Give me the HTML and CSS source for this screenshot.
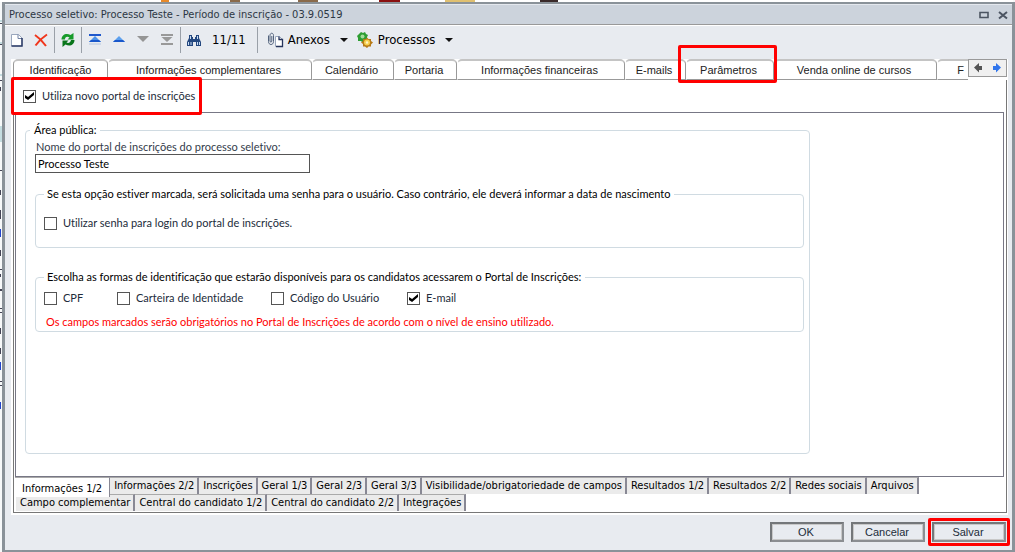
FILE: index.html
```
<!DOCTYPE html>
<html lang="pt-BR">
<head>
<meta charset="utf-8">
<title>Processo seletivo: Processo Teste</title>
<link rel="stylesheet" href="styles.css">
</head>
<body>
<div class="backdrop">
<svg class="backdrop-top" height="2" width="1015" aria-hidden="true"><path fill="#e88a2a" d="M161 0h8v2h-8z"/><path fill="#8a6a4a" d="M230 0h10v2h-10zM298 0h20v2h-20z"/><path fill="#8a1010" d="M379 0h21v2h-21z"/><path fill="#e0c070" d="M445 0h30v2h-30z"/><path fill="#3a2a2a" d="M540 0h18v2h-18z"/></svg>
<svg class="backdrop-side" width="2" height="552" aria-hidden="true"><path fill="#c4dce0" d="M0 20h2v2H0zM0 42h2v2H0zM0 74h2v2H0zM0 126h2v16H0z"/><path fill="#445" d="M0 23h2v1H0zM0 44h2v1H0zM0 80h2v1H0zM0 87h1v4H0zM0 170h2v1H0zM0 190h1v5H0zM0 210h1v9H0zM0 250h1v6H0zM0 269h2v1H0zM0 274h1v3H0zM0 289h2v2H0zM0 308h2v1H0zM0 312h2v1H0zM0 328h1v6H0zM0 348h1v6H0zM0 381h2v1H0zM0 385h2v1H0z"/><path fill="#24c" d="M0 229h1v8H0zM0 362h1v8H0zM0 402h1v7H0z"/></svg>
<div class="window">
  <header class="titlebar">
    <span class="title">Processo seletivo: Processo Teste - Período de inscrição - 03.9.0519</span>
    <button class="winbtn" aria-label="Maximizar"><svg width="10" height="10"><path d="M1 2.500h8v5h-8z" fill="none" stroke="#4c5562" stroke-width="1.600"/></svg></button>
    <button class="winbtn" aria-label="Fechar"><svg width="10" height="10"><path d="M1 2l8 6.500M9 2L1 8.500" stroke="#4c5562" stroke-width="2"/></svg></button>
  </header>
  <div class="toolbar">
    <button class="tool" aria-label="Novo"><svg width="16" height="16"><path d="M2.500 2.500h7l3.500 3.500v8h-10.500z" fill="#fff" stroke="#9aa7bd"/><path d="M9 2.500V6.500h4" fill="none" stroke="#7383a4"/><path d="M13 6v8H2.500" fill="none" stroke="#2c3c68" stroke-width="1.500"/></svg></button>
    <button class="tool" aria-label="Excluir"><svg width="16" height="16"><path d="M2 3q6 4 11 11M14 2.500Q7 7 2.500 13.500" stroke="#f0361c" stroke-width="2" fill="none"/></svg></button>
    <span class="sep"></span>
    <button class="tool" aria-label="Atualizar"><svg width="16" height="16"><path d="M1.500 7.500c0-5 5-7 9-4.500l3-2v6.500H7.500l2-2C7 4 5 5 5 7.500z" fill="#179a2a"/><path d="M14.500 8c0 5-5 7-9 4.500L2.500 15V8.500h6l-2 2c2 1 4 0 4.500-2.500z" fill="#08751a"/></svg></button>
    <span class="sep"></span>
    <button class="tool" aria-label="Primeiro"><svg width="16" height="16"><path d="M2 3h12" stroke="#1f58cc" stroke-width="2"/><path d="M8 4l6 6H2z" fill="#4b91e8"/><path d="M4 8h8l2 2H2z" fill="#1857cb"/><path d="M2 12h12" stroke="#b4c6e0"/></svg></button>
    <button class="tool" aria-label="Anterior"><svg width="16" height="16"><path d="M8 4l6 6H2z" fill="#5da0ed"/><path d="M4 8h8l2 2H2z" fill="#1857cb"/></svg></button>
    <button class="tool" aria-label="Próximo"><svg width="16" height="16"><path d="M2 4h12L8 10z" fill="#959595"/></svg></button>
    <button class="tool" aria-label="Último"><svg width="16" height="16"><path d="M2 3h12M2 12h12" stroke="#999" stroke-width="2"/><path d="M2.500 5h11L8 10z" fill="#999"/></svg></button>
    <span class="sep"></span>
    <button class="tool" aria-label="Localizar"><svg width="16" height="16"><path d="M3 3h3v2h1v2h2V5h1V3h3v3l2 4v4h-5v-4H7v4H1v-4l2-4z" fill="#23477f"/><path d="M4.500 4v3M11.500 4v3M2.500 10v3M11.500 10v3M13.500 10v3M5 10v3" stroke="#c8dcf4"/></svg></button>
    <span class="counter">11/11</span>
    <span class="sep"></span>
    <button class="menu"><svg width="18" height="16"><path d="M8.500 4.500h4l3 3v7h-7z" fill="#fff" stroke="#9aa7bd"/><path d="M12 4.500v3h3.500v7H9" fill="none" stroke="#26345c" stroke-width="1.300"/><path d="M1.500 3.500v6c0 4 5 4 5 0V3.500c0-3-3.500-3-3.500 0v5.500c0 1.500 1.800 1.500 1.800 0V4" fill="none" stroke="#52627c"/></svg>Anexos<span class="caret"></span></button>
    <button class="menu"><svg width="18" height="16"><path d="M4 0l2 1 2-1 1 2 2 1-1 2v3l-2 1-2 2-2-2-3 0 0-3-1-2 2-2z" fill="#2e9e33"/><circle cx="5.500" cy="4.500" r="2" fill="#a4dc9b"/><path d="M10 5.500l1.500 1.500 2.500 0v2l2 1.500-2 2v2h-2.500L10 16l-2-1.500H6v-2.500L4 10.500 6 9V7h2.500z" fill="#b77a16"/><circle cx="10" cy="10.500" r="3" fill="#f6cf4e"/><circle cx="10" cy="10.500" r="1.200" fill="#fff5c4"/></svg>Processos<span class="caret"></span></button>
  </div>
  <main class="sheet">
    <nav class="tabs">
      <button class="tab w-94">Identificação</button>
      <button class="tab w-204">Informações complementares</button>
      <button class="tab w-82">Calendário</button>
      <button class="tab w-63">Portaria</button>
      <button class="tab w-168">Informações financeiras</button>
      <button class="tab w-61">E-mails</button>
      <span class="tab-slot"><button class="tab w-88">Parâmetros</button><i class="mark mark-tab"></i></span>
      <button class="tab w-164">Venda online de cursos</button>
      <button class="tab tab-cut">F</button>
      <span class="scroller">
        <button aria-label="Abas anteriores"><svg width="10" height="12"><path d="M1 5.500L6 1v3h3v4H6v2.500z" fill="#555"/></svg></button>
        <button aria-label="Próximas abas"><svg width="10" height="12"><path d="M9 5.500L4 1v3H1v4h3v2.500z" fill="#3176ec"/></svg></button>
      </span>
    </nav>
    <div class="body">
      <div class="portal"><label class="check"><input type="checkbox" checked>Utiliza novo portal de inscrições</label><i class="mark mark-portal"></i></div>
      <section class="panel">
        <fieldset class="group area">
          <legend>Área pública:</legend>
          <label class="name-label" for="nome">Nome do portal de inscrições do processo seletivo:</label>
          <input class="text" id="nome" type="text" value="Processo Teste">
          <fieldset class="group password">
            <legend>Se esta opção estiver marcada, será solicitada uma senha para o usuário. Caso contrário, ele deverá informar a data de nascimento</legend>
            <label class="check"><input type="checkbox">Utilizar senha para login do portal de inscrições.</label>
          </fieldset>
          <fieldset class="group ident">
            <legend>Escolha as formas de identificação que estarão disponíveis para os candidatos acessarem o Portal de Inscrições:</legend>
            <div class="options">
              <label class="check"><input type="checkbox">CPF</label>
              <label class="check"><input type="checkbox">Carteira de Identidade</label>
              <label class="check"><input type="checkbox">Código do Usuário</label>
              <label class="check"><input type="checkbox" checked>E-mail</label>
            </div>
            <p class="warning">Os campos marcados serão obrigatórios no Portal de Inscrições de acordo com o nível de ensino utilizado.</p>
          </fieldset>
        </fieldset>
      </section>
      <nav class="subtabs">
        <div class="subrow"><button class="sub active">Informações 1/2</button><button class="sub">Informações 2/2</button><button class="sub">Inscrições</button><button class="sub">Geral 1/3</button><button class="sub">Geral 2/3</button><button class="sub">Geral 3/3</button><button class="sub">Visibilidade/obrigatoriedade de campos</button><button class="sub">Resultados 1/2</button><button class="sub">Resultados 2/2</button><button class="sub">Redes sociais</button><button class="sub">Arquivos</button></div>
        <div class="subrow second"><button class="sub">Campo complementar</button><button class="sub">Central do candidato 1/2</button><button class="sub">Central do candidato 2/2</button><button class="sub">Integrações</button></div>
      </nav>
    </div>
  </main>
  <footer class="actions">
    <button class="action">OK</button>
    <button class="action">Cancelar</button>
    <span class="save"><button class="action">Salvar</button><i class="mark mark-save"></i></span>
  </footer>
</div>
</div>
</body>
</html>
```
FILE: styles.css
```
* { box-sizing: border-box; }
body { margin: 0; font: 11px/14px "Liberation Sans", Arial, sans-serif; color: #000; background: #fff; }
button, input { font: inherit; color: inherit; }
button { margin: 0; padding: 0; border: 0; background: none; white-space: nowrap; }
svg { display: block; flex: none; }
.backdrop { position: relative; min-height: 100vh; display: flex; flex-direction: column; padding-left: 2px; overflow: hidden; background: #f7f9fa; }
.backdrop-top { margin-left: -2px; width: 100%; background: #fff; }
.backdrop-side { position: absolute; left: 0; top: 0; }
.window { flex: 1; display: flex; flex-direction: column; border: 3px solid #8a9299; border-width: 2px 3px 2px 3px; background: #e8ebf0; }
.titlebar { height: 21px; display: flex; align-items: center; gap: 8px; padding: 0 3px 0 4px; background: #ccd3dc; border-top: 1px solid #e4e8ee; border-bottom: 1px solid #999; color: #2c3744; font-family: "DejaVu Sans Condensed", "DejaVu Sans", sans-serif; }
.title { flex: 1; }
.winbtn { width: 11px; }
.toolbar { height: 34px; display: flex; align-items: center; padding: 0 4px 5px 0; border-top: 1px solid #fff; font: 13px/16px "DejaVu Sans Condensed", "DejaVu Sans", sans-serif; }
.tool { width: 24px; display: flex; justify-content: center; }
.sep { width: 1px; height: 26px; background: #9aa0a8; margin: 0 1px; }
.counter { padding: 0 10px 0 6px; }
.menu { display: flex; align-items: center; gap: 3px; padding: 0 1px 0 8px; }
.caret { border: 4px solid transparent; border-top-color: #111; border-bottom: 0; margin-left: 7px; }
.sheet { flex: 1; display: flex; flex-direction: column; margin: 0 4px 0 6px; background: #fff; padding: 0 1px 2px 2px; }
.tabs { height: 21px; display: flex; position: relative; background: #fff; }
.tab { height: 21px; flex: none; padding-right: 3px; border: 1px solid #999; border-top: 2px solid #c4c4c4; border-left-color: transparent; border-radius: 5px 5px 0 0; color: #222; }
.tab:first-child { border-left-color: #999; padding-right: 0; }
.tab-slot { position: relative; }
.w-94 { width: 95px; } .w-204 { width: 204px; } .w-82 { width: 82px; } .w-63 { width: 63px; } .w-168 { width: 168px; } .w-61 { width: 61px; } .w-88 { width: 88px; } .w-164 { width: 163px; }
.tab-slot .tab { border-left-color: transparent; padding-right: 3px; }
.tab-cut { flex: 1 1 0; text-align: right; padding-right: 4px; border-right: 0; border-radius: 5px 0 0 0; }
.scroller { display: flex; width: 39px; height: 18px; border: 1px solid #999; background: #f0f0f0; }
.scroller button { flex: 1; display: flex; justify-content: center; align-items: center; }
.body { flex: 1; display: flex; flex-direction: column; border: 1px solid #777; border-top: 0; padding: 0 2px 0 1px; font-family: Lato, "Liberation Sans", sans-serif; font-variant-ligatures: none; }
.portal { position: relative; height: 32px; display: flex; align-items: center; padding-left: 8px; }
.check { display: flex; align-items: center; gap: 6px; color: #222b3a; white-space: nowrap; }
.check input { appearance: none; width: 13px; height: 13px; margin: 0; border: 1px solid #555; background: #fff; display: grid; place-items: center; }
.check input:checked::before { content: ""; width: 9px; height: 8px; background: #000; clip-path: polygon(0 36%, 34% 62%, 100% 0, 100% 38%, 34% 100%, 0 74%); }
.panel { flex: 1; display: flex; border: 1px solid #777785; padding: 10px 0 22px 9px; }
.group { margin: 0; min-width: 0; border: 1px solid #d0dbe2; border-radius: 4px; }
.group > legend { padding: 0 4px; }
.group .group > legend { padding: 0 4px 0 3px; }
.area { flex: 0 1 785px; padding: 3px 5px 0 9px; }
.area > legend { margin-left: -5px; }
.name-label { display: block; color: #333b4a; padding-left: 1px; }
.text { display: block; width: 275px; max-width: 100%; height: 19px; border: 1px solid #555; padding: 0 2px; }
.password { margin-top: 14px; padding: 15px 8px 17px; }
.ident { margin-top: 22px; padding: 7px 8px 2px; }
.options { display: grid; grid-template-columns: 73px 154px 136px auto; justify-content: start; }
.warning { margin: 10px 0 0 2px; color: #f00; }
.subtabs { min-height: 35px; padding-bottom: 1px; font: 11px/14px "DejaVu Sans Condensed", "DejaVu Sans", sans-serif; }
.subrow { display: flex; height: 17px; }
.sub { flex: none; height: 17px; padding: 0 3px 0 4px; border: 1px solid #888894; border-top: 1px solid #aaa; border-bottom: 0; border-left: 0; border-right-width: 2px; background: #ebebeb; }
.active { background: #fff; height: 20px; position: relative; z-index: 1; padding: 3px 7px 0; border-right-width: 1px; }
.second { padding-left: 1px; }
.actions { height: 35px; display: flex; align-items: flex-start; gap: 7px; padding: 7px 6px 0; justify-content: flex-end; }
.action { display: block; width: 74px; height: 20px; padding-right: 2px; border: 2px solid; border-color: #74777a #8b8e92 #8b8e92 #74777a; box-shadow: inset 0 0 0 1px #c8c8c8; background: #e8ebf0; color: #222b3a; }
.save { position: relative; }
.mark { position: absolute; border: 3px solid #f00; border-radius: 2px; pointer-events: none; z-index: 3; }
.mark-tab { inset: -14px -3px -3px -8px; }
.mark-portal { left: -4px; top: -3px; width: 191px; bottom: -3px; }
.mark-save { inset: -4px; }
```
